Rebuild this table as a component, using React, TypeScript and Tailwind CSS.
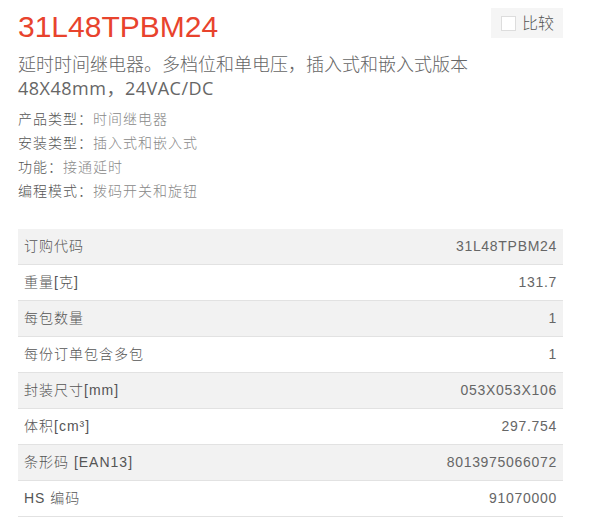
import React from "react";

const rows: [string, string][] = [
  ["订购代码", "31L48TPBM24"],
  ["重量[克]", "131.7"],
  ["每包数量", "1"],
  ["每份订单包含多包", "1"],
  ["封装尺寸[mm]", "053X053X106"],
  ["体积[cm³]", "297.754"],
  ["条形码 [EAN13]", "8013975066072"],
  ["HS 编码", "91070000"],
];

const specs: [string, string][] = [
  ["产品类型：", "时间继电器"],
  ["安装类型：", "插入式和嵌入式"],
  ["功能：", "接通延时"],
  ["编程模式：", "拨码开关和旋钮"],
];

export default function App() {
  return (
    <div
      className="w-[593px] h-[531px] bg-white pl-[18px] pr-[30px] overflow-hidden"
      style={{ fontFamily: '"Open Sans", "Noto Sans CJK SC", sans-serif' }}
    >
      <div className="flex items-start justify-between pt-[8px]">
        <h1
          className="text-[30px] leading-[36px] text-[#e8432d] font-normal mt-[1px]"
          style={{ fontFamily: '"Liberation Sans", sans-serif' }}
        >
          31L48TPBM24
        </h1>
        <button className="flex items-center gap-[6px] h-[30px] w-[72px] bg-[#f5f5f5] pl-[10px] text-[16px] text-[#555] font-light">
          <span className="w-[15px] h-[15px] border border-[#ddd] bg-white inline-block" />
          <span className="leading-none">比较</span>
        </button>
      </div>
      <div className="mt-[7px] text-[18px] leading-[24px] text-[#666] font-light">
        <div>延时时间继电器。多档位和单电压，插入式和嵌入式版本</div>
        <div className="tracking-[0.5px] font-normal">48X48mm，24VAC/DC</div>
      </div>
      <div
        className="mt-[7px] text-[14px] leading-[24px] tracking-[1px] font-light"
        style={{ fontFamily: '"Liberation Sans", "Noto Sans CJK SC", sans-serif' }}
      >
        {specs.map(([k, v]) => (
          <div key={k}>
            <span className="text-[#555]">{k}</span>
            <span className="text-[#888]">{v}</span>
          </div>
        ))}
      </div>
      <div
        className="mt-[26px] text-[14px] text-[#555] font-light"
        style={{ fontFamily: '"Liberation Sans", "Noto Sans CJK SC", sans-serif' }}
      >
        {rows.map(([k, v], i) => (
          <div
            key={k}
            className={`flex items-center justify-between h-[36px] px-[6px] border-b border-[#e2e2e2] ${
              i % 2 === 0 ? "bg-[#f2f2f2]" : "bg-white"
            }`}
          >
            <span className="tracking-[1px]">{k}</span>
            <span className="tracking-[0.7px] text-[#666]">{v}</span>
          </div>
        ))}
      </div>
    </div>
  );
}
